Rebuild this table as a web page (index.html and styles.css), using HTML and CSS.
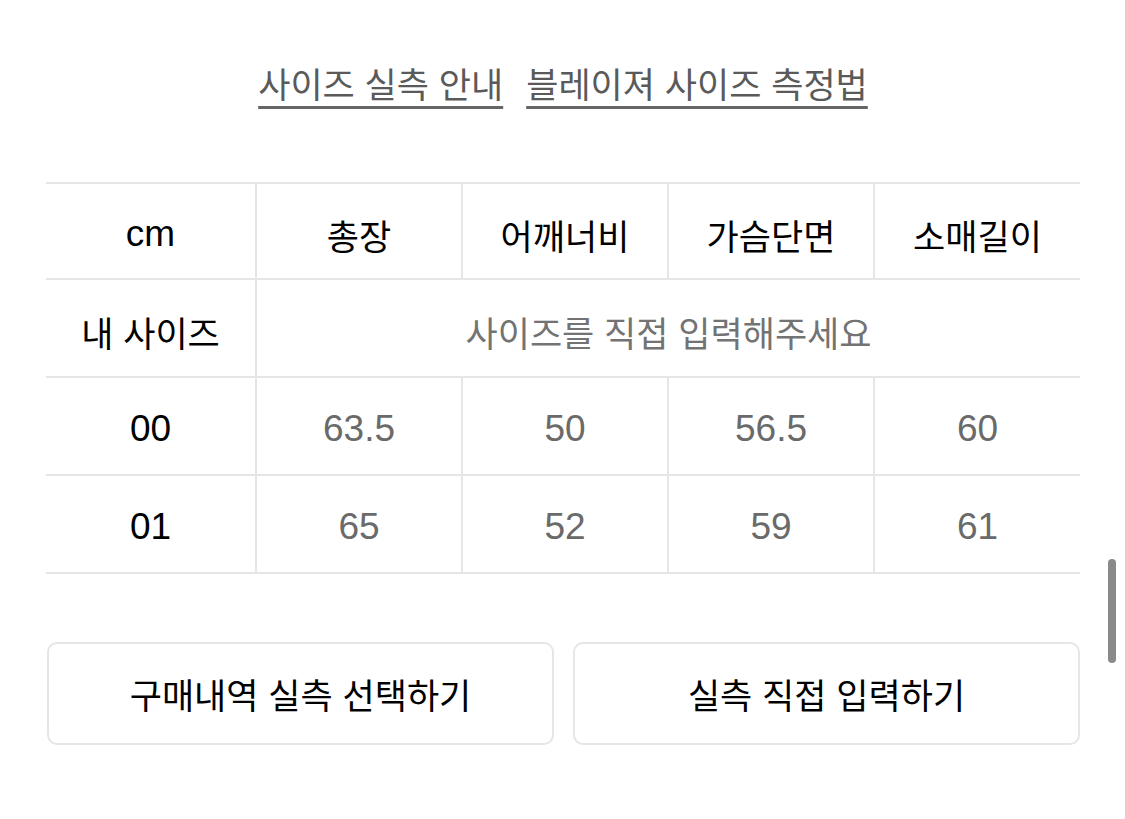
FILE: index.html
```html
<!DOCTYPE html>
<html lang="ko">
<head>
<meta charset="utf-8">
<title>사이즈</title>
<link rel="stylesheet" href="styles.css">
</head>
<body>
<div class="page">
  <nav class="guide-links">
    <a class="guide-link" href="#">사이즈 실측 안내</a>
    <a class="guide-link" href="#">블레이져 사이즈 측정법</a>
  </nav>

  <table class="size-table">
    <thead>
      <tr>
        <th class="label">cm</th>
        <th>총장</th>
        <th>어깨너비</th>
        <th>가슴단면</th>
        <th>소매길이</th>
      </tr>
    </thead>
    <tbody>
      <tr>
        <th class="label ko">내 사이즈</th>
        <td class="placeholder" colspan="4">사이즈를 직접 입력해주세요</td>
      </tr>
      <tr>
        <th class="label num">00</th>
        <td class="num">63.5</td>
        <td class="num">50</td>
        <td class="num">56.5</td>
        <td class="num">60</td>
      </tr>
      <tr>
        <th class="label num">01</th>
        <td class="num">65</td>
        <td class="num">52</td>
        <td class="num">59</td>
        <td class="num">61</td>
      </tr>
    </tbody>
  </table>

  <div class="actions">
    <button class="action-btn" type="button">구매내역 실측 선택하기</button>
    <button class="action-btn" type="button">실측 직접 입력하기</button>
  </div>
</div>
<div class="scrollbar"></div>
</body>
</html>
```

FILE: styles.css
```css
html, body {
  margin: 0;
  padding: 0;
  background: #ffffff;
}

body {
  font-family: "Liberation Sans", "Noto Sans CJK KR", sans-serif;
  color: #111111;
}

.page {
  width: 1034px;
  margin-left: 46px;
  padding-top: 58px;
}

.guide-links {
  display: flex;
  justify-content: center;
  gap: 23px;
}

.guide-link {
  font-family: "Noto Sans CJK KR", sans-serif;
  font-size: 35px;
  line-height: 50px;
  color: #5a5a5a;
  text-decoration: underline;
  text-decoration-thickness: 3px;
  text-underline-offset: 8px;
  text-decoration-color: #666666;
}

.size-table {
  margin-top: 74px;
  width: 1034px;
  border-collapse: collapse;
  table-layout: fixed;
}

.size-table th,
.size-table td {
  height: 90px;
  padding: 6px 0 0 0;
  text-align: center;
  vertical-align: middle;
  border-top: 2px solid #e6e6e6;
  border-bottom: 2px solid #e6e6e6;
  border-left: 2px solid #e6e6e6;
}

.size-table thead th {
  height: 88px;
}

.size-table th.label {
  width: 209px;
  border-left: none;
}

.size-table thead th {
  font-family: "Noto Sans CJK KR", sans-serif;
  font-size: 35px;
  font-weight: 400;
  color: #000000;
}

.size-table thead th.label {
  font-family: "Liberation Sans", sans-serif;
  font-size: 37px;
  font-weight: 400;
}

.size-table th.ko {
  font-family: "Noto Sans CJK KR", sans-serif;
  font-size: 35px;
  font-weight: 400;
  color: #000000;
}

.size-table .num {
  font-family: "Liberation Sans", sans-serif;
  font-size: 37px;
  font-weight: 400;
  color: #6a6a6a;
}

.size-table th.num {
  color: #000000;
}

.size-table .placeholder {
  font-family: "Noto Sans CJK KR", sans-serif;
  font-size: 35px;
  color: #737373;
}

.actions {
  margin-top: 68px;
  margin-left: 1px;
  width: 1033px;
  display: grid;
  grid-template-columns: 1fr 1fr;
  gap: 19px;
}

.action-btn {
  height: 103px;
  background: #ffffff;
  border: 2px solid #e6e6e6;
  border-radius: 10px;
  font-family: "Noto Sans CJK KR", sans-serif;
  font-size: 35px;
  font-weight: 400;
  color: #000000;
  padding: 0;
}

.scrollbar {
  position: fixed;
  left: 1108px;
  top: 559px;
  width: 8px;
  height: 104px;
  border-radius: 4px;
  background: #8a8a8a;
}
```
